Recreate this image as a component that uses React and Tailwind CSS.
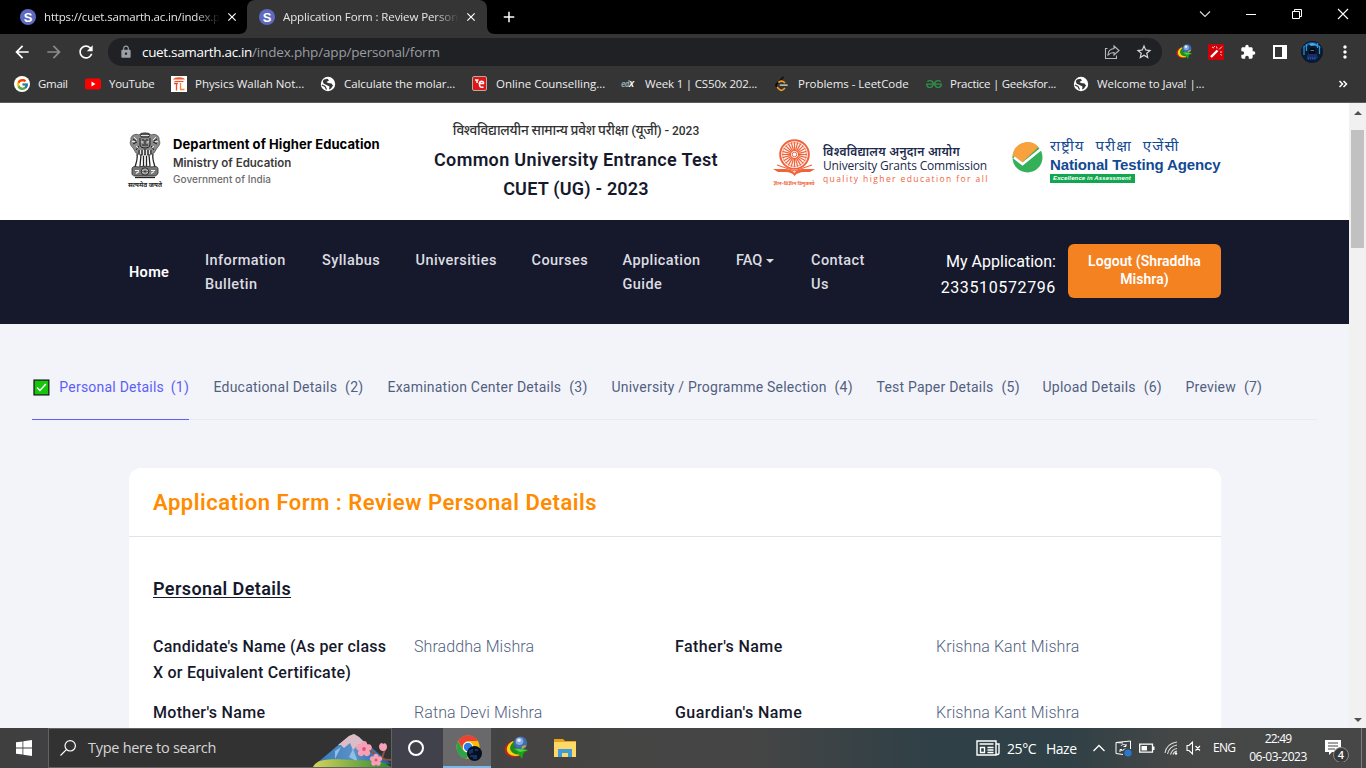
import React from 'react';
import { MdArrowBack, MdArrowForward, MdRefresh, MdLock, MdStarBorder, MdExtension, MdMoreVert, MdAdd, MdClose } from 'react-icons/md';
import { FcGoogle } from 'react-icons/fc';
import { SiGeeksforgeeks } from 'react-icons/si';

const UI = "font-['Open_Sans','Noto_Sans',sans-serif]";
const PLEX = "font-['Roboto','Noto_Sans',sans-serif]";

function Favicon() {
  return (
    <span className="flex size-4 shrink-0 items-center justify-center rounded-full bg-[#5c6bc0] font-['Liberation_Sans',sans-serif] text-[13px] leading-none font-bold text-white">S</span>
  );
}

function TabStrip() {
  return (
    <div className="flex h-[34px] bg-black text-[11.5px] text-[#e4e6e9]">
      <div className="flex w-[239px] items-center pl-5">
        <Favicon />
        <span className="ml-2 w-[176px] overflow-hidden whitespace-nowrap tracking-[-0.17px] [mask-image:linear-gradient(to_right,black_86%,transparent)]">https://cuet.samarth.ac.in/index.p</span>
        <MdClose className="ml-[5px] size-[14px] text-white" />
      </div>
      <svg className="mt-[26px] h-2 w-2 shrink-0" viewBox="0 0 8 8"><path d="M8 0v8H0c5 0 8-3 8-8z" fill="#353535" /></svg>
      <div className="flex w-[240px] items-center rounded-t-lg bg-[#353535] pl-3">
        <Favicon />
        <span className="ml-2 w-[176px] overflow-hidden whitespace-nowrap tracking-[-0.1px] [mask-image:linear-gradient(to_right,black_86%,transparent)]">Application Form : Review Person</span>
        <MdClose className="ml-[5px] size-[14px] text-white" />
      </div>
      <svg className="mt-[26px] h-2 w-2 shrink-0" viewBox="0 0 8 8"><path d="M0 0v8h8C3 8 0 5 0 0z" fill="#353535" /></svg>
      <MdAdd className="mt-2 ml-[5px] size-[18px] text-white" />
      <svg className="ml-auto h-7 w-[168px]" viewBox="0 0 168 28" fill="none" stroke="#fff">
        <path d="M2 11.5l5 5 5-5" strokeWidth="1.1" stroke="#ddd" />
        <path d="M48 14.5h10M94.500 11.500h7v7h-7zM96.500 11V9.500h7v7h-2" strokeWidth="1" />
        <path d="M140 9l10 10M150 9l-10 10" strokeWidth="1.1" />
      </svg>
    </div>
  );
}

function IdmIcon({ className }) {
  return (
    <svg className={className} viewBox="0 0 24 24">
      <path d="M9 5C2 6-1 13 1.500 17s9 6 14 3c-5-1-8-6-6.500-15z" fill="#c9201a" />
      <path d="M9.500 5C4 7 1.500 12 3.500 16s9 5 13 3c-5-2-8-6-7-14z" fill="#f0d60f" />
      <path d="M10 6C6.500 8 5 12 7 15s6 4 9 3c-4-3-6-6-6-12z" fill="#238a23" />
      <circle cx="16.500" cy="7" r="6.600" fill="#3f6fb0" />
      <circle cx="15.500" cy="5.200" r="3.800" fill="#86abda" />
      <circle cx="15" cy="4.200" r="1.800" fill="#e3eefa" />
      <path d="M18 10c3-1 4-1 4.500-.5-1 2-3 3.500-5 3.500z" fill="#b9a44c" />
      <path d="M10 12.500l14 1.500-4.500 3-1.500 6-3-4.500z" fill="#17a514" />
      <path d="M10 12.500l14 1.500-8 2z" fill="#4fd83e" />
    </svg>
  );
}

function Avatar({ className }) {
  return (
    <svg className={className} viewBox="0 0 22 22">
      <circle cx="11" cy="11" r="11" fill="#0b1a33" />
      <path d="M2 7a10 10 0 0 1 18 0l-3-1-2-2-5-1-4 2z" fill="#1c639f" />
      <path d="M3 5v9M5.500 3v7M18.500 5v8M16.500 2v5" stroke="#2b97d6" strokeWidth="1.200" />
      <path d="M8 3c3-2 7-1 9 3l-3-1.500-4 .5z" fill="#4aa9e8" />
      <path d="M6 17c0-8 10-8 11 0z" fill="#17305c" />
      <path d="M8 9c1.500-3 5.500-3 6.500 0v4H8z" fill="#070c16" />
      <path d="M9.500 9.500h3.500" stroke="#4a7aa8" />
      <path d="M6.500 17.500h9" stroke="#2450d8" strokeWidth="2" strokeDasharray="1.500 .7" />
    </svg>
  );
}

function Toolbar() {
  return (
    <div className="flex h-9 items-center bg-[#353535] pl-3">
      <MdArrowBack className="size-5 text-white" />
      <MdArrowForward className="ml-3 size-5 text-[#8b8b8b]" />
      <MdRefresh className="ml-3 size-5 text-white" />
      <div className="ml-3 flex h-7 w-[1054px] items-center rounded-full bg-[#202124] pl-[11px] text-[13.500px]">
        <MdLock className="size-[14px] text-[#9aa0a6]" />
        <span className="ml-[9px] w-[110px] whitespace-nowrap tracking-[-0.33px] text-white">cuet.samarth.ac.in</span>
        <span className="whitespace-nowrap tracking-[-0.17px] text-[#9a9da1]">/index.php/app/personal/form</span>
        <svg className="ml-auto size-4" viewBox="0 0 16 16" fill="none" stroke="#b4b7bb" strokeWidth="1.100">
          <path d="M3.500 4.500H1.500v10h11v-3" />
          <path d="M10 2l5 4.500L10 11V8.500c-3 0-4.500 1-6 2.500 0-4 2-6 6-6.500z" />
        </svg>
        <MdStarBorder className="mr-[9px] ml-[15px] size-[18px] text-[#d5d8db]" />
      </div>
      <IdmIcon className="ml-[14px] size-4" />
      <svg className="ml-4 size-4" viewBox="0 0 16 16">
        <path d="M0 0h16v16H0z" fill="#cf0007" />
        <path d="M3 13l6.500-6.500" stroke="#fff" strokeWidth="2.400" />
        <path d="M8.500 2.500l.5 2M12 8h2M11 5.500l3-3M4 3l2 1M12.500 10l1 1.500M6 2l1 1" stroke="#ffd9d9" strokeWidth="1" />
      </svg>
      <MdExtension className="ml-4 size-4 text-white" />
      <span className="ml-[17px] h-[14px] w-[14px] border-2 border-r-[5px] border-white" />
      <Avatar className="ml-[14px] size-[22px]" />
      <MdMoreVert className="ml-3 size-5 text-white" />
    </div>
  );
}

function Globe() {
  return (
    <svg className="size-4" viewBox="0 0 16 16">
      <circle cx="8" cy="8" r="7.200" fill="#fff" />
      <path d="M4 3.500l3.500-.8L9 4.500 6.500 6 8 7l3.500.5 1.500 2-2 3-2 1 .5-3L6.500 9 3.500 7.500 2.800 5z" fill="#353535" />
      <path d="M2 9l3 1.500 1.500 3" stroke="#353535" strokeWidth="1.200" fill="none" />
    </svg>
  );
}

function Bookmarks() {
  const t = 'ml-2 whitespace-nowrap';
  return (
    <div className="flex h-[33px] items-center border-b border-[#5b5b5b] bg-[#353535] pb-1 pl-[14px] text-[11.500px] text-[#eceef0]">
      <div className="flex w-[71px] items-center"><span className="flex size-4 items-center justify-center rounded-full bg-white"><FcGoogle className="size-[13px]" /></span><span className={`${t} tracking-[-0.3px]`}>Gmail</span></div>
      <div className="flex w-[86px] items-center">
        <svg className="size-4" viewBox="0 0 16 16"><rect y="2.500" width="16" height="11" rx="2.500" fill="#f00" /><path d="M6.500 5.500v5l4-2.500z" fill="#fff" /></svg>
        <span className={`${t} tracking-[-0.28px]`}>YouTube</span>
      </div>
      <div className="flex w-[149px] items-center">
        <svg className="size-4" viewBox="0 0 16 16"><path d="M0 0h16v16H0z" fill="#fff" /><path d="M2 3.500c2-3 10-3 12 0z" fill="#f0562b" /><path d="M3.500 5.500h9" stroke="#f0562b" strokeWidth="1.200" /><path d="M5.500 7v7.500M3 7.500h4" stroke="#ec4a32" strokeWidth="1.300" /><path d="M9.500 7v6.500h4" stroke="#f58a32" strokeWidth="1.300" fill="none" /></svg>
        <span className={`${t} tracking-[-0.04px]`}>Physics Wallah Not...</span>
      </div>
      <div className="flex w-[152px] items-center"><Globe /><span className={`${t} tracking-[-0.09px]`}>Calculate the molar...</span></div>
      <div className="flex w-[149px] items-center">
        <svg className="size-4" viewBox="0 0 16 16"><rect x=".5" y=".5" width="14" height="14" rx="1.500" fill="#e01515" stroke="#b8a8a8" /><path d="M3 4h3.500M5 4v3M6.500 7.500h5c.5-3-4-3-4 0s.5 4.500 4 3.500" stroke="#fff" strokeWidth="1.500" fill="none" /></svg>
        <span className={`${t} tracking-[-0.02px]`}>Online Counselling...</span>
      </div>
      <div className="flex w-[153px] items-center"><span className="w-4 text-[8px] leading-none font-bold tracking-[-0.600px] text-[#8fa3a9] italic">ed<span className="text-white">X</span></span><span className={`${t} tracking-[-0.18px]`}>Week 1 | CS50x 202...</span></div>
      <div className="flex w-[152px] items-center">
        <svg className="size-4" viewBox="0 0 16 16" fill="none" strokeWidth="1.700" strokeLinecap="round"><path d="M9 1.500L2.500 8c-.8 1-.5 2 .5 3" stroke="#0c0c0c" /><path d="M3.500 11.500l2 2c1.500 1.500 3 1 5-1M5 6c2-1.500 3.500-1.500 5.500.5" stroke="#f5a11b" /><path d="M6.500 9.200H13" stroke="#b3b3b3" /></svg>
        <span className={`${t} tracking-[-0.04px]`}>Problems - LeetCode</span>
      </div>
      <div className="flex w-[147px] items-center"><SiGeeksforgeeks className="size-4 text-[#2f8d46]" /><span className={`${t} tracking-[-0.28px]`}>Practice | Geeksfor...</span></div>
      <div className="flex items-center"><Globe /><span className={`${t} tracking-[-0.1px]`}>Welcome to Java! |...</span></div>
      <svg className="mr-[18px] ml-auto size-[10px]" viewBox="0 0 10 10" fill="none" stroke="#fff" strokeWidth="1.500"><path d="M1.500 2l3 3-3 3M5.500 2l3 3-3 3" /></svg>
    </div>
  );
}

function Emblem() {
  return (
    <svg className="h-[47px] w-8" viewBox="0 0 32 47" fill="none" stroke="#222">
      <path d="M10 3C6 1 1 4 2 8c-2 3 0 6 2 8l3 5 4 2h10l4-2 3-5c2-2 4-5 2-8 1-4-4-7-8-5-2-3-10-3-12 0z" fill="#8c8c8c" stroke="#444" strokeWidth=".7" />
      <path d="M12 2h8v3h-8zM13 8h2M17 8h2M16 8v4M13 13h6M11 6v7c0 4 10 4 10 0V6M4 7l3 2M28 7l-3 2M4 12l4-2M28 12l-4-2M7 18l3-4M25 18l-3-4M10 18v4M13 18v5M16 17v6M19 18v5M22 18v4" strokeWidth="1" stroke="#1c1c1c" />
      <path d="M12 3.500h8M5 5l3 3M27 5l-3 3M12 10h2M18 10h2M7 14l2 2M25 14l-2 2M14.500 18v5M17.500 18v5M11.500 18v4M20.500 18v4M3 9.500h3M29 9.500h-3" stroke="#f0f0f0" strokeWidth=".9" />
      <path d="M8 22c1 5-1 9-2 13M12 23l-1 11M14.500 24v10M17.500 24v10M20 23l1 11M24 22c-1 5 1 9 2 13" strokeWidth="1.300" />
      <path d="M3 37c0-3 4-3 6-2 3-1 11-1 14 0 2-1 6-1 6 2v4c-1 3-3 3-5 3H8c-3 0-5 0-5-3z" fill="#777" strokeWidth=".8" />
      <circle cx="16" cy="39.500" r="3.700" fill="#ddd" />
      <path d="M16 36v7M12.500 39.500h7M13.500 37l5 5M18.500 37l-5 5" strokeWidth=".6" />
      <path d="M6 38.500h4M7 41.500l3-2M22 38.500h4M22 41.500l3-2" stroke="#f2f2f2" strokeWidth="1.200" />
      <path d="M6 45.500h20" strokeWidth="1.300" />
    </svg>
  );
}

const RAYS = Array.from({ length: 24 }, (_, i) => (i * Math.PI) / 12);

function UgcMark() {
  return (
    <svg className="h-[38px] w-[44px]" viewBox="0 0 44 38" fill="none" stroke="#f0643c">
      <circle cx="22.500" cy="15.500" r="14.300" strokeWidth="2" />
      <circle cx="22.500" cy="15.500" r="12" strokeWidth=".6" />
      {RAYS.map((a) => (
        <path key={a} d={`M${22.5 + 3.5 * Math.cos(a)} ${15.5 + 3.5 * Math.sin(a)}L${22.5 + 12.5 * Math.cos(a)} ${15.5 + 12.5 * Math.sin(a)}`} strokeWidth="1.300" />
      ))}
      <circle cx="22.500" cy="15.500" r="2.300" strokeWidth="1" />
      <path d="M1 30h12c4 0 7 1 9.500 4 2-3 5-4 9-4H43l-5 3h-6c-4 0-7 1-9.500 4-2-3-5-4-9-4H6z" fill="#f0643c" stroke="none" />
      <path d="M5 26l17.500 6L40 26" strokeWidth="1.100" />
    </svg>
  );
}

function SiteHeader() {
  return (
    <header className="flex h-[117px] bg-white pl-[129px]">
      <div className="flex w-[275px] pt-[29px]">
        <div className="flex w-8 flex-col items-center">
          <Emblem />
          <span className="mt-px text-[6.500px] leading-[10px] font-bold whitespace-nowrap text-[#222]">सत्यमेव जयते</span>
        </div>
        <div className="ml-3 whitespace-nowrap font-['Inter',sans-serif]">
          <div className="mt-[2px] text-[13px] leading-5 font-bold tracking-[0.070px] text-black">Department of Higher Education</div>
          <div className="text-[11.500px] leading-[18px] font-semibold tracking-[-0.010px] text-[#3b3b3b]">Ministry of Education</div>
          <div className="text-[10px] leading-[15px] font-medium tracking-[0.04px] text-[#6c6c6c]">Government of India</div>
        </div>
      </div>
      <div className="w-[344px] pt-[13px] text-center whitespace-nowrap text-[#16192c]">
        <div className="text-[13.600px] leading-[28px] font-medium tracking-[-0.300px] text-[#333]">विश्वविद्यालयीन सामान्य प्रवेश परीक्षा (यूजी) - <span className="text-[12px] tracking-normal">2023</span></div>
        <div className="text-[18px] leading-[29px] font-semibold tracking-[0.34px]">Common University Entrance Test</div>
        <div className="text-[18px] leading-[29px] font-semibold tracking-[0.21px]">CUET (UG) - 2023</div>
      </div>
      <div className="ml-[24px] flex w-[240px] pt-[36px]">
        <div className="flex w-[44px] flex-col items-center">
          <UgcMark />
          <span className="mt-[2px] text-[5px] leading-[8px] font-bold whitespace-nowrap text-[#f0643c]">ज्ञान-विज्ञान विमुक्तये</span>
        </div>
        <div className="ml-[7px] whitespace-nowrap text-[#1c2a4d]">
          <div className="mt-[6px] text-[12px] leading-[14px] font-semibold tracking-[0.320px]">विश्वविद्यालय अनुदान आयोग</div>
          <div className="font-['Open_Sans',sans-serif] text-[12px] leading-[13px] tracking-[-0.17px]">University Grants Commission</div>
          <div className="font-['Open_Sans',sans-serif] text-[8.500px] leading-[13px] tracking-[1.4px] text-[#f0643c]">quality higher education for all</div>
        </div>
      </div>
      <div className="flex pt-[33px]">
        <svg className="mt-[6px] size-[31px]" viewBox="0 0 31 31">
          <circle cx="15.500" cy="15.500" r="15" fill="#34b058" />
          <path d="M.6 14A15 15 0 0 1 26.500 5L10 20.500 3 15z" fill="#f9a13d" />
          <path d="M2 15.500l8.500 6.500L29 7" fill="none" stroke="#fff" strokeWidth="2.600" />
        </svg>
        <div className="ml-[7px] whitespace-nowrap text-[#134a92]">
          <div className="text-[15px] leading-[20px] font-normal tracking-[1.100px] [word-spacing:6px]">राष्ट्रीय परीक्षा एजेंसी</div>
          <div className="font-['Liberation_Sans',sans-serif] text-[15px] leading-[17px] font-bold tracking-[-0.130px]">National Testing Agency</div>
          <div className="mt-px w-[85px] bg-[#13a650] pl-[3px] font-['Liberation_Sans',sans-serif] text-[6px] leading-[9px] font-bold tracking-[0.13px] text-white italic">Excellence in Assessment</div>
        </div>
      </div>
    </header>
  );
}

function NavBar() {
  return (
    <nav className="flex h-[104px] items-center bg-[#16192c] pl-[129px] text-white">
      <a className="w-[76px] pt-0.5 text-[14.500px] font-semibold tracking-[0.350px]">Home</a>
      <div className="flex w-[700px] items-start pt-0.5 text-[14.500px] leading-6 font-medium tracking-[0.430px] text-[#dcdce0]">
        <a className="w-[117px]">Information<br />Bulletin</a>
        <a className="w-[93.500px]">Syllabus</a>
        <a className="w-[116px]">Universities</a>
        <a className="w-[91px]">Courses</a>
        <a className="w-[113.500px]">Application<br />Guide</a>
        <a className="flex w-[75px] items-center tracking-normal">FAQ<span className="ml-1 border-x-4 border-t-4 border-x-transparent border-t-[#dcdce0]" /></a>
        <a>Contact<br />Us</a>
      </div>
      <div className="ml-auto pt-1.5 text-right text-[16px] leading-[26px]">
        <div className="tracking-[0.02px]">My Application:</div>
        <div className="tracking-[0.62px]">233510572796</div>
      </div>
      <button className="mr-[128px] mb-0.5 ml-3 h-[54px] w-[153px] rounded-md bg-[#f58220] pb-0.5 text-[14px] leading-[18px] font-semibold tracking-[0.05px]">Logout (Shraddha<br />Mishra)</button>
    </nav>
  );
}

const STEPS = [
  ['Educational Details', 2, 'w-[174px]'],
  ['Examination Center Details', 3, 'w-[224px]'],
  ['University / Programme Selection', 4, 'w-[265px]'],
  ['Test Paper Details', 5, 'w-[166px]'],
  ['Upload Details', 6, 'w-[143px]'],
  ['Preview', 7, 'w-[78px]'],
];

function Steps() {
  return (
    <div className="mr-8 ml-8 flex h-[44px] border-b border-[#e7eaf0] text-[14px] leading-[22px] tracking-[0.220px] whitespace-nowrap text-[#525f7f]">
      <div className="mr-[24.500px] flex h-[44px] w-[157px] border-b border-[#5c60f5] text-[#5c60f5]">
        <svg className="mt-[3px] ml-px size-[17px]" viewBox="0 0 17 17">
          <rect x="1" y="1" width="15" height="15" fill="#16c60c" stroke="#111" strokeWidth="1.200" />
          <path d="M4 8.500l3 3 6-6.500" fill="none" stroke="#fff" strokeWidth="1.500" />
        </svg>
        <span className="ml-[9.500px] w-[112.500px]">Personal Details</span>
        <span>(1)</span>
      </div>
      {STEPS.map(([label, n, w]) => (
        <div key={n} className={w}>
          <span className="mr-2">{label}</span>
          <span>({n})</span>
        </div>
      ))}
    </div>
  );
}

function Card() {
  const key = 'font-medium text-[#16192c]';
  const val = 'font-light text-[#525f7f] tracking-[0.080px]';
  return (
    <section className="ml-[129px] w-[1092px] rounded-t-xl bg-white pb-6">
      <h1 className="flex h-[69px] items-center border-b border-[#e0e4ea] px-6 text-[22px] font-semibold tracking-[0.520px] text-[#ff8c00]">Application Form : Review Personal Details</h1>
      <div className="px-6 pt-[39px]">
        <h2 className="text-[18px] leading-[26px] font-semibold tracking-[0.400px] text-[#16192c] underline decoration-1 underline-offset-2">Personal Details</h2>
        <div className="mt-8 grid grid-cols-4 gap-y-[14px] text-[16px] leading-[26px] whitespace-nowrap">
          <div className={`${key} tracking-[0.230px]`}>Candidate's Name (As per class<br />X or Equivalent Certificate)</div>
          <div className={val}>Shraddha Mishra</div>
          <div className={`${key} tracking-[0.400px]`}>Father's Name</div>
          <div className={val}>Krishna Kant Mishra</div>
          <div className={`${key} tracking-[0.300px]`}>Mother's Name</div>
          <div className={val}>Ratna Devi Mishra</div>
          <div className={`${key} tracking-[0.450px]`}>Guardian's Name</div>
          <div className={val}>Krishna Kant Mishra</div>
        </div>
      </div>
    </section>
  );
}

function Blossom({ x, y, s }) {
  return (
    <g transform={`translate(${x} ${y}) scale(${s})`}>
      {[0, 72, 144, 216, 288].map((r) => (
        <ellipse key={r} cx="0" cy="-4.500" rx="3.400" ry="4" fill="#f7a1b8" transform={`rotate(${r})`} />
      ))}
      <circle r="2" fill="#e0527c" />
    </g>
  );
}

function Taskbar() {
  return (
    <div className="flex h-10 bg-[linear-gradient(90deg,#3f3f40_0%,#42414a_29%,#454443_38%,#454545_55%,#2f4046_68%,#2f4046_78%,#454747_86%,#474747_100%)] text-white">
      <div className="flex w-12 items-center justify-center">
        <svg className="size-4" viewBox="0 0 16 16" fill="#fff"><path d="M0 2.300l6.500-.9v6.200H0zM7.300 1.300L16 0v7.600H7.300zM0 8.400h6.500v6.200L0 13.700zM7.300 8.400H16V16l-8.700-1.300z" /></svg>
      </div>
      <div className="flex w-[344px] items-center border border-[#626262] bg-[#323232]">
        <svg className="ml-[11px] size-4" viewBox="0 0 16 16" fill="none" stroke="#fff" strokeWidth="1.200"><circle cx="10.200" cy="5.800" r="5.200" /><path d="M6.400 9.600L.5 15.500" /></svg>
        <span className="ml-3 text-[14.500px] tracking-[-0.28px] whitespace-nowrap text-[#d6d6d6]">Type here to search</span>
        <svg className="ml-auto h-[38px] w-20" viewBox="0 0 80 38">
          <defs><linearGradient id="hill" x1="0" x2="1"><stop offset="0" stopColor="#d6d45a" /><stop offset="1" stopColor="#2d8a2f" /></linearGradient><linearGradient id="mount" x1="0" x2="1"><stop offset="0" stopColor="#3778b8" /><stop offset=".5" stopColor="#5a92c8" /><stop offset="1" stopColor="#2a5a9a" /></linearGradient></defs>
          <path d="M6 34L38 7l5-2 5 3 32 27z" fill="url(#mount)" />
          <path d="M27 16L38 7l5-2 5 3 9 9-6 3-3-5-6 6-3-7-6 5-3-3z" fill="#dcbcc6" />
          <path d="M24 22l6-4-6 12zM42 20l5 13-9-5z" fill="#90bfe0" />
          <path d="M2 38c4-9 20-8 38-7s30-1 40 7z" fill="url(#hill)" />
          <path d="M58 21c7 4 10 10 22 10M71 29l3-9" fill="none" stroke="#8a5540" strokeWidth="2" />
          <Blossom x={53} y={20} s={0.95} />
          <Blossom x={65} y={31} s={0.75} />
          <path d="M68 17c1-3 3-4 4-2 2-2 4 0 4 3 0 5-8 6-8-1z" fill="#f7a1b8" />
        </svg>
      </div>
      <div className="flex w-[51px] items-center justify-center bg-[#41414c] pr-[3px]"><span className="size-4 rounded-full border-2 border-white" /></div>
      <div className="flex w-12 items-center justify-center border-b-2 border-[#76b9ed] bg-[#69696c]">
        <svg className="mt-0.5 ml-1 size-[26px]" viewBox="0 0 26 26">
          <circle cx="12" cy="12" r="11.500" fill="#fbbc05" />
          <path d="M2 6a11.500 11.500 0 0 1 20 0H12a6 6 0 0 0-5 8z" fill="#ea4335" />
          <path d="M2 6l5 9c1 2 4 3 6 2l-2 6.500C2 23-2 13 2 6z" fill="#2ba24c" />
          <circle cx="12" cy="12" r="5.200" fill="#fff" /><circle cx="12" cy="12" r="4.200" fill="#2b7de9" />
          <circle cx="18.500" cy="18.500" r="7.500" fill="#061021" />
          <path d="M14 15v4M16 14v4M19 15h3M14 21h7M17 23h4" stroke="#1e57a5" />
        </svg>
      </div>
      <div className="flex w-[49px] items-center justify-center"><IdmIcon className="size-6" /></div>
      <div className="flex w-[50px] items-center justify-center">
        <svg className="size-[22px]" viewBox="0 0 22 22">
          <path d="M0 2h9l2 2h11v16H0z" fill="#e8a317" /><path d="M0 5h22v15H0z" fill="#ffd968" />
          <path d="M4 12h14v8h-4v-4H8v4H4z" fill="#3e9bdc" />
        </svg>
      </div>
      <div className="ml-auto flex items-center">
        <svg className="h-4 w-6" viewBox="0 0 24 16" fill="none" stroke="#fff" strokeWidth="1.400"><path d="M1 1h19v14H1zM20 4h3v9c0 2-3 2-3 0M3.500 4h14M11.500 7.500h6M11.500 10h6M11.500 12.500h6M4.500 7.500h4v5h-4z" /></svg>
        <span className="ml-[7px] w-[39px] text-[14px] tracking-[-0.400px]">25°C</span>
        <span className="w-[47px] text-[14px] tracking-[-0.500px]">Haze</span>
        <svg className="h-3 w-3" viewBox="0 0 12 12" fill="none" stroke="#fff" strokeWidth="1.300"><path d="M.5 9L6 3.500 11.500 9" /></svg>
        <svg className="ml-[10px] h-[17px] w-[17px]" viewBox="0 0 17 17" fill="none" stroke="#fff"><path d="M8 14.500l-7-1V2.500L15.500 1v8M1 2.500l7 .5" /><path d="M5 9.500c1 1.500 4 1 5-1M6 6c1-2 4-2 5 0M11 4v2.500H8.500M5 12V9.500h2" /><circle cx="13" cy="13" r="3.600" fill="#2b78c9" stroke="none" /></svg>
        <svg className="ml-[7px] h-4 w-4" viewBox="0 0 16 16"><path d="M.7 4.200h12.800v8H.7z" fill="none" stroke="#fff" strokeWidth="1.300" /><path d="M2.500 6h5.500v4.500H2.500zM14 6.500h1.500v3.500H14z" fill="#fff" /></svg>
        <svg className="ml-[9px] h-4 w-4" viewBox="0 0 16 16" fill="none" stroke="#ddd" strokeWidth="1.100"><path d="M1 13C2 7 6 3 13 2M3.500 14C4.500 9 8 6 13 5M6.500 14.500c1-3.500 3-5.500 6.500-6M9 14.500c.5-2 2-3 4-3.500" /><circle cx="12" cy="13.500" r="1.200" fill="#fff" stroke="none" /></svg>
        <svg className="ml-[6px] h-4 w-4" viewBox="0 0 16 16" fill="none" stroke="#fff" strokeWidth="1.100"><path d="M1 5.500h2l3.500-3.500v12L3 10.500H1zM9.500 6l4.500 4.500M14 6l-4.500 4.500" /></svg>
        <span className="ml-[11px] w-[36px] text-[12px] tracking-[-0.700px]">ENG</span>
        <div className="w-[58px] text-center text-[12px] leading-[18px] tracking-[-0.500px] whitespace-nowrap"><div className="tracking-[-0.85px]">22:49</div><div>06-03-2023</div></div>
        <svg className="ml-[18px] h-7 w-[26px]" viewBox="0 0 26 28"><path d="M0 6h16v12H7l-3 3v-3H0z" fill="#fff" /><path d="M3 9h10M3 12h10M3 15h7" stroke="#444" /><circle cx="16" cy="21" r="7.500" fill="#3a3a3a" stroke="#8a8a8a" /><text x="16" y="25" textAnchor="middle" fill="#fff" fontSize="11" fontWeight="600">4</text></svg>
        <span className="mr-1 ml-[10px] h-10 w-px bg-[#7d7d7d]" />
      </div>
    </div>
  );
}

function Scrollbar() {
  return (
    <div className="flex w-[17px] flex-col items-center bg-[#f1f1f1]">
      <span className="mt-[8px] border-x-4 border-b-4 border-x-transparent border-b-[#505050]" />
      <span className="mt-[15px] h-[118px] w-[13px] bg-[#c1c1c1]" />
      <span className="mt-auto mb-[6px] border-x-4 border-t-4 border-x-transparent border-t-[#505050]" />
    </div>
  );
}

export default function App() {
  return (
    <div className={`flex h-[768px] w-[1366px] flex-col overflow-hidden ${UI}`}>
      <TabStrip />
      <Toolbar />
      <Bookmarks />
      <div className="flex h-[625px] overflow-hidden">
        <main className={`w-[1349px] overflow-hidden bg-[#f3f4fa] ${PLEX}`}>
          <SiteHeader />
          <NavBar />
          <div className="pt-[52px] pb-12"><Steps /></div>
          <Card />
        </main>
        <Scrollbar />
      </div>
      <Taskbar />
    </div>
  );
}
